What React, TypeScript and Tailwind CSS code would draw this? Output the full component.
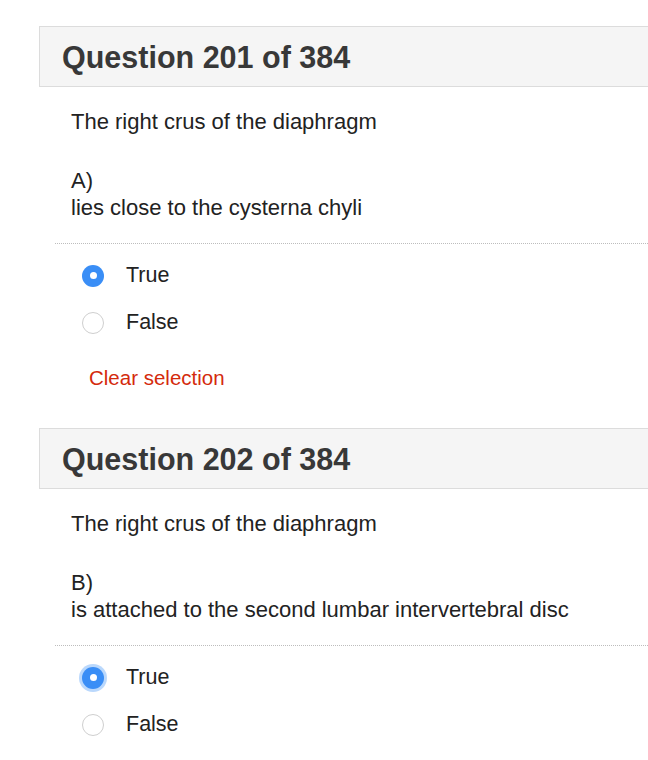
import { useState } from "react";

interface Question {
  number: number;
  stem: string;
  letter: string;
  option: string;
  answer: "true" | "false" | null;
  focused?: boolean;
}

const TOTAL = 384;

const questions: Question[] = [
  {
    number: 201,
    stem: "The right crus of the diaphragm",
    letter: "A)",
    option: "lies close to the cysterna chyli",
    answer: "true",
  },
  {
    number: 202,
    stem: "The right crus of the diaphragm",
    letter: "B)",
    option: "is attached to the second lumbar intervertebral disc",
    answer: "true",
    focused: true,
  },
];

const Radio = ({
  checked,
  focused,
  label,
  onClick,
}: {
  checked: boolean;
  focused?: boolean;
  label: string;
  onClick: () => void;
}) => (
  <button
    type="button"
    onClick={onClick}
    className="flex items-center h-[47px] pl-[27px] cursor-pointer"
  >
    {checked ? (
      <span
        className={`flex items-center justify-center w-[22px] h-[22px] rounded-full bg-[#3a8ef6] ${
          focused ? "shadow-[0_0_0_3px_rgba(58,142,246,0.35)]" : ""
        }`}
      >
        <span className="w-[7px] h-[7px] rounded-full bg-white" />
      </span>
    ) : (
      <span className="w-[22px] h-[22px] rounded-full border-[1.5px] border-[#cfcfcf] bg-white" />
    )}
    <span className="ml-[22px] text-[21.5px] leading-[27px] text-[#222]">
      {label}
    </span>
  </button>
);

const QuestionBlock = ({ q, last }: { q: Question; last: boolean }) => {
  const [answer, setAnswer] = useState(q.answer);

  return (
    <section>
      {/* Header runs off the right edge */}
      <div className="w-[680px] h-[61px] flex items-center pl-[22px] bg-[#f5f5f5] border border-[#dcdcdc]">
        <h2 className="text-[30.5px] font-bold text-[#383838] leading-none pt-[2px]">
          Question {q.number} of {TOTAL}
        </h2>
      </div>

      <div className="pl-4">
        <div className="pl-4 pt-[21px] text-[22px] leading-[27px] text-[#222]">
          <p>{q.stem}</p>
          <p className="mt-[32px]">{q.letter}</p>
          <p>{q.option}</p>
        </div>

        <div className="mt-[22px] border-t border-dotted border-[#bdbdbd]" />

        <div className="pt-[8px] flex flex-col items-start">
          <Radio
            checked={answer === "true"}
            focused={q.focused}
            label="True"
            onClick={() => setAnswer("true")}
          />
          <Radio
            checked={answer === "false"}
            label="False"
            onClick={() => setAnswer("false")}
          />
        </div>

        {!last && (
          <button
            type="button"
            onClick={() => setAnswer(null)}
            className="mt-[18px] ml-[34px] mb-[37px] text-[20.5px] leading-[27px] text-[#d42a0c] cursor-pointer"
          >
            Clear selection
          </button>
        )}
      </div>
    </section>
  );
}

export default function App() {
  return (
    <div className="w-[648px] h-[760px] overflow-hidden bg-white font-['Liberation_Sans',Arial,sans-serif]">
      <div className="pt-[26px] pl-[39px]">
        {questions.map((q, i) => (
          <QuestionBlock key={q.number} q={q} last={i === questions.length - 1} />
        ))}
      </div>
    </div>
  );
}
